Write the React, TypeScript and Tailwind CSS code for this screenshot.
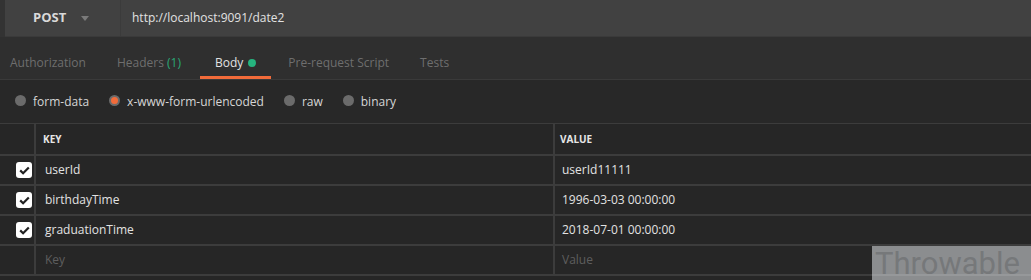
import React from 'react';

const rows = [
  { key: 'userId', value: 'userId11111' },
  { key: 'birthdayTime', value: '1996-03-03 00:00:00' },
  { key: 'graduationTime', value: '2018-07-01 00:00:00' },
];

const Check = () => (
  <div className="w-[16px] h-[16px] rounded-[3px] bg-white flex items-center justify-center">
    <svg width="11" height="9" viewBox="0 0 11 9">
      <path d="M1.2 4.4 L4.1 7.2 L9.8 1.4" fill="none" stroke="#222" strokeWidth="2.2" />
    </svg>
  </div>
);

const Radio = ({ active, label }: { active?: boolean; label: string }) => (
  <div className="flex items-center gap-[7px]">
    <div className="w-[11px] h-[11px] mb-[3px] rounded-full bg-[#6b6b6b] flex items-center justify-center">
      {active && <div className="w-[7px] h-[7px] rounded-full bg-[#f26b3a]" />}
    </div>
    <span className="text-[12px] text-[#d6d6d6]">{label}</span>
  </div>
);

export default function App() {
  return (
    <div className="w-[1031px] h-[280px] bg-[#262626] overflow-hidden relative font-['Open_Sans',sans-serif]">
      {/* request bar */}
      <div className="h-[37px] flex bg-[#333333]">
        <div className="ml-[5px] flex-1 flex bg-[#414141] border-b border-[#3a3a3a]">
          <div className="w-[116px] flex items-center border-r border-[#3b3b3b]">
            <span className="ml-[28px] text-[13px] font-bold text-[#d9d9d9]">POST</span>
            <svg className="ml-[15px]" width="8" height="5" viewBox="0 0 8 5">
              <path d="M0 0 H8 L4 5 Z" fill="#7a7a7a" />
            </svg>
          </div>
          <div className="flex items-center pl-[11px] text-[12px] text-[#e2e2e2]">http://localhost:9091/date2</div>
        </div>
      </div>

      {/* tabs */}
      <div className="h-[43px] bg-[#2f2f2f] border-b border-[#3a3a3a] flex items-end text-[12px] leading-[16px] text-[#6e6e6e]">
        <div className="ml-[10px] pb-[8px]">Authorization</div>
        <div className="ml-[31px] pb-[8px]">
          Headers <span className="text-[#2aa876]">(1)</span>
        </div>
        <div className="ml-[19px] px-[15px] pb-[5px] border-b-[3px] border-[#f26b3a] flex items-center text-[#e2e2e2]">
          Body
          <span className="ml-[5px] w-[8px] h-[8px] rounded-full bg-[#26b47f]" />
        </div>
        <div className="ml-[17px] pb-[8px]">Pre-request Script</div>
        <div className="ml-[31px] pb-[8px]">Tests</div>
      </div>

      {/* body types */}
      <div className="h-[44px] flex items-center gap-[20px] pl-[15px] border-b border-[#3c3c3c] bg-[#282828]">
        <Radio label="form-data" />
        <Radio active label="x-www-form-urlencoded" />
        <Radio label="raw" />
        <Radio label="binary" />
      </div>

      {/* table */}
      <div>
        <div className="h-[32px] flex border-b-2 border-[#3c3c3c] text-[10px] font-bold text-[#e6e6e6]">
          <div className="w-[36px] border-r-2 border-[#3c3c3c]" />
          <div className="w-[519px] flex items-center pl-[7px] border-r-2 border-[#3c3c3c]">KEY</div>
          <div className="flex items-center pl-[5px]">VALUE</div>
        </div>
        {rows.map((r) => (
          <div key={r.key} className="h-[30px] flex border-b-2 border-[#3c3c3c] text-[12px] text-[#e2e2e2]">
            <div className="w-[36px] border-r-2 border-[#3c3c3c] flex items-center justify-end pr-[2px]">
              <Check />
            </div>
            <div className="w-[519px] flex items-center pl-[9px] border-r-2 border-[#3c3c3c]">{r.key}</div>
            <div className="flex items-center pl-[7px]">{r.value}</div>
          </div>
        ))}
        <div className="h-[30px] flex border-b-2 border-[#3c3c3c] text-[12px] text-[#5e5e5e]">
          <div className="w-[36px] border-r-2 border-[#3c3c3c]" />
          <div className="w-[519px] flex items-center pl-[9px] border-r-2 border-[#3c3c3c]">Key</div>
          <div className="flex items-center pl-[7px]">Value</div>
        </div>
      </div>

      <div className="absolute left-[872px] top-[246px] w-[159px] h-[34px] bg-[rgba(240,244,248,0.5)] flex items-center pl-[3px] text-[31px] leading-none text-[#76787a] font-['Roboto',sans-serif]">
        Throwable
      </div>
    </div>
  );
}
